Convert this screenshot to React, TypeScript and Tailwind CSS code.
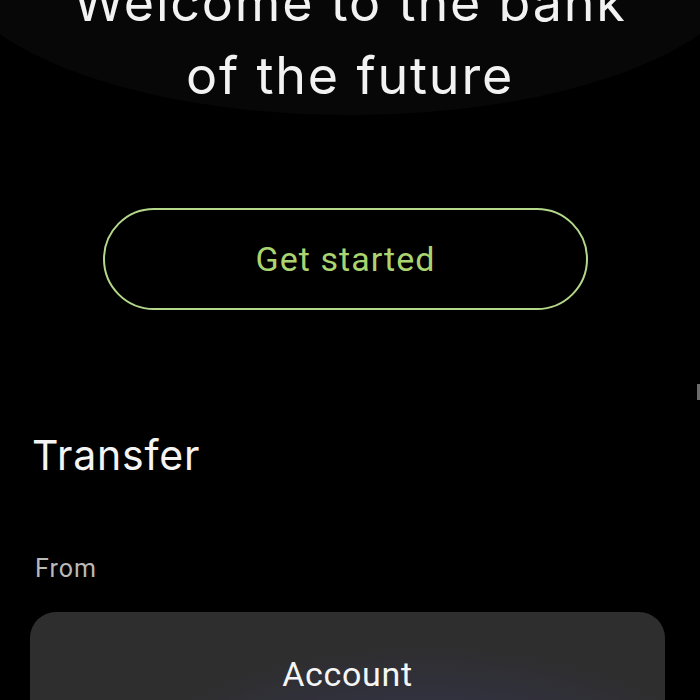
export default function App() {
  return (
    <div className="relative h-[700px] w-[700px] overflow-hidden bg-black">
      {/* soft glow behind the hero heading */}
      <div className="pointer-events-none absolute left-[-50px] top-[-199px] h-[314px] w-[800px] rounded-[50%] bg-[#070707]" />
      <span className="absolute left-[697px] top-[384px] h-[16px] w-[3px] bg-[#6b6b6b]" />

      <div className="relative flex flex-col">
        <h1 className="mt-[-34px] text-center font-['Inter',sans-serif] text-[52px] font-normal leading-[73px] tracking-[0.035em] text-[#f2f2f2]">
          Welcome to the bank
          <br />
          of the future
        </h1>

        <button className="ml-[103px] mt-[96px] flex h-[102px] w-[485px] items-center justify-center rounded-full border-2 border-[#b4d88a] font-['Roboto',sans-serif] text-[34px] tracking-[0.03em] text-[#aad46f]">
          Get started
        </button>

        <h2 className="ml-[32px] mt-[121px] font-['Inter',sans-serif] text-[41px] font-normal leading-[48px] tracking-[0.02em] text-[#f4f4f4]">
          Transfer
        </h2>

        <p className="ml-[35px] mt-[75px] font-['Roboto',sans-serif] text-[25px] leading-[30px] tracking-[0.04em] text-[#b9b9b9]">
          From
        </p>

        <div className="ml-[30px] mt-[28px] h-[200px] w-[635px] rounded-[26px] bg-[radial-gradient(ellipse_at_62%_100%,#3e3b5a_0%,#34334a_25%,#2e2e2e_60%)] pt-[42px]">
          <p className="text-center font-['Roboto',sans-serif] text-[34px] leading-[40px] tracking-[0.02em] text-[#f5f5f5]">
            Account
          </p>
        </div>
      </div>
    </div>
  );
}
